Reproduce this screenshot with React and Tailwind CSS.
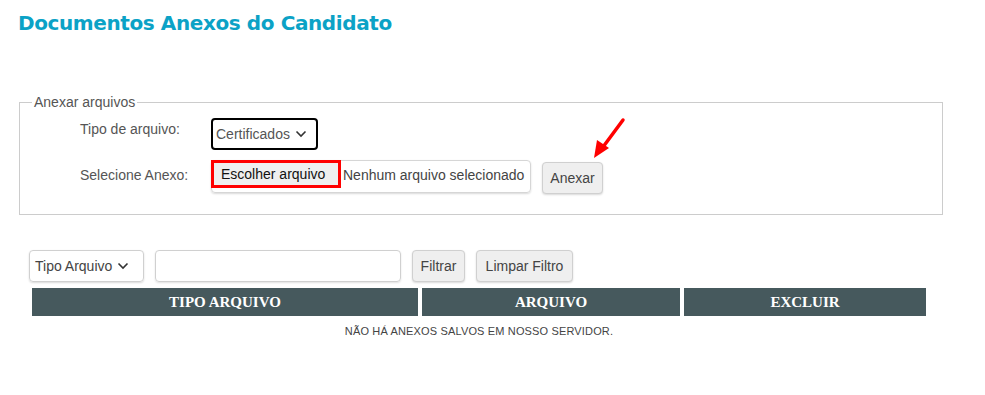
import React from "react";

const Chevron = () => (
  <svg width="12" height="8" viewBox="0 0 12 8" className="ml-[5px]">
    <path d="M1.5 1.5 L6 6 L10.5 1.5" fill="none" stroke="#333" strokeWidth="1.6" />
  </svg>
);

export default function App() {
  return (
    <div className="w-[985px] h-[395px] bg-white relative font-['Liberation_Sans',Arial,sans-serif] text-[#444]">
      <h1 className="pl-[18px] pt-[9px] text-[20px] leading-[28px] font-bold text-[#0ba2c6] font-['DejaVu_Sans',Verdana,sans-serif] tracking-[-0.4px]">
        Documentos Anexos do Candidato
      </h1>

      <fieldset className="mt-[57px] ml-[19px] w-[924px] h-[121px] border border-[#cccccc] px-[12px]">
        <legend className="px-[2px] text-[14px] leading-[16px] text-[#555] ml-[0px]">Anexar arquivos</legend>
        <div className="flex flex-col pl-[48px] pt-[8px] gap-[10px]">
          <div className="flex items-start">
            <div className="w-[131px] pt-[1px] text-[14px] text-[#555]">Tipo de arquivo:</div>
            <div className="h-[32px] w-[107px] border-2 border-black rounded-[4px] flex items-center pl-[3px] text-[14px] text-[#555]">
              Certificados
              <Chevron />
            </div>
          </div>
          <div className="flex items-start">
            <div className="w-[131px] pt-[5px] text-[14px] text-[#555]">Selecione Anexo:</div>
            <div className="relative h-[33px] w-[320px] border border-[#d6d6d6] rounded-[4px] shadow-[0_1px_2px_rgba(0,0,0,0.15)] flex items-start">
              <div className="h-[28px] w-[130px] -ml-px -mt-px border-[3px] border-[#ff0000] bg-[#efefef] flex items-center pl-[7px] text-[14px] text-[#111]">
                Escolher arquivo
              </div>
              <div className="pl-[2px] pt-[4px] text-[14px] text-[#444]">Nenhum arquivo selecionado</div>
            </div>
            <div className="ml-[11px] mt-[2px] h-[32px] w-[61px] border border-[#d0d0d0] rounded-[4px] bg-[#efefef] shadow-[0_1px_2px_rgba(0,0,0,0.15)] flex items-center justify-center text-[14px] text-[#444]">
              Anexar
            </div>
          </div>
        </div>
      </fieldset>

      <div className="flex items-center mt-[35px] ml-[29px] gap-[11px] h-[32px]">
        <div className="h-[32px] w-[115px] border border-[#d0d0d0] rounded-[4px] shadow-[0_1px_2px_rgba(0,0,0,0.15)] flex items-center pl-[5px] text-[14px] text-[#444]">
          Tipo Arquivo
          <Chevron />
        </div>
        <div className="h-[32px] w-[246px] border border-[#d0d0d0] rounded-[4px] shadow-[0_1px_2px_rgba(0,0,0,0.12)]" />
        <div className="h-[32px] w-[53px] border border-[#d0d0d0] rounded-[4px] bg-[#efefef] shadow-[0_1px_2px_rgba(0,0,0,0.15)] flex items-center justify-center text-[14px] text-[#444]">
          Filtrar
        </div>
        <div className="h-[32px] w-[97px] border border-[#d0d0d0] rounded-[4px] bg-[#efefef] shadow-[0_1px_2px_rgba(0,0,0,0.15)] flex items-center justify-center text-[14px] text-[#444]">
          Limpar Filtro
        </div>
      </div>

      <div className="ml-[32px] mt-[6px] w-[894px]">
        <div className="flex gap-[4px] h-[28px] font-['Liberation_Serif','Times_New_Roman',serif] font-bold text-[15px] text-white">
          <div className="w-[386px] bg-[#46595d] flex items-center justify-center">TIPO ARQUIVO</div>
          <div className="w-[258px] bg-[#46595d] flex items-center justify-center">ARQUIVO</div>
          <div className="w-[242px] bg-[#46595d] flex items-center justify-center">EXCLUIR</div>
        </div>
        <div className="text-center text-[11px] leading-[14px] mt-[8px] text-[#444] tracking-[0.15px]">
          NÃO HÁ ANEXOS SALVOS EM NOSSO SERVIDOR.
        </div>
      </div>

      <svg className="absolute left-[585px] top-[115px]" width="45" height="48" viewBox="0 0 45 48">
        <line x1="38" y1="5" x2="18" y2="32" stroke="#ff0000" strokeWidth="3.5" strokeLinecap="round" />
        <polygon points="9,43 12,25 24,33" fill="#ff0000" />
      </svg>
    </div>
  );
}
